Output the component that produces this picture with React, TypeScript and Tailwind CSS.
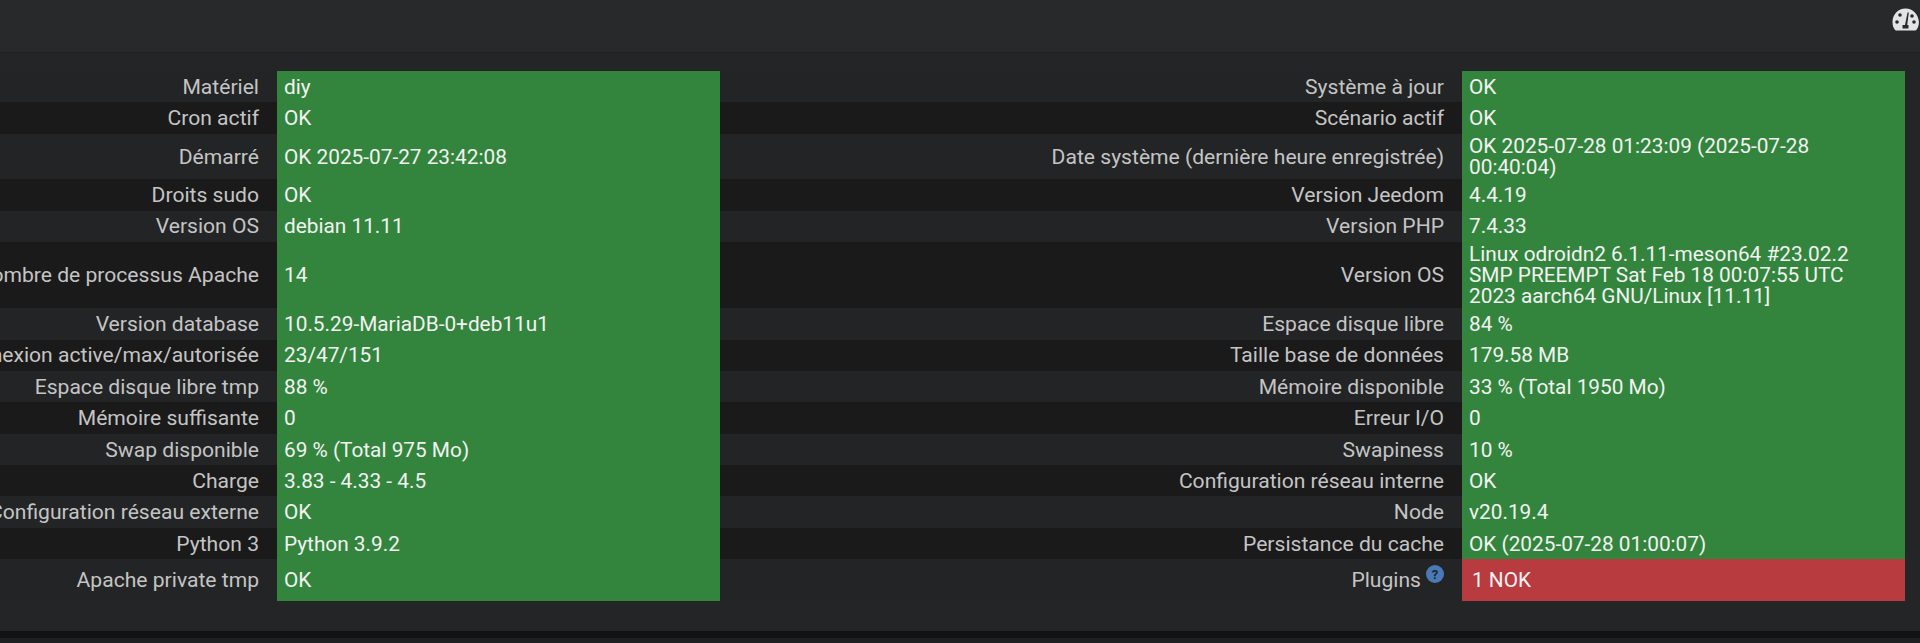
type Row = {
  label: string
  value: string
  label2: string
  value2: string
  help?: boolean
  bad?: boolean
  last?: boolean
}

const rows: Row[] = [
  { label: 'Matériel', value: 'diy', label2: 'Système à jour', value2: 'OK' },
  { label: 'Cron actif', value: 'OK', label2: 'Scénario actif', value2: 'OK' },
  { label: 'Démarré', value: 'OK 2025-07-27 23:42:08', label2: 'Date système (dernière heure enregistrée)', value2: 'OK 2025-07-28 01:23:09 (2025-07-28 00:40:04)' },
  { label: 'Droits sudo', value: 'OK', label2: 'Version Jeedom', value2: '4.4.19' },
  { label: 'Version OS', value: 'debian 11.11', label2: 'Version PHP', value2: '7.4.33' },
  { label: 'Nombre de processus Apache', value: '14', label2: 'Version OS', value2: 'Linux odroidn2 6.1.11-meson64 #23.02.2 SMP PREEMPT Sat Feb 18 00:07:55 UTC 2023 aarch64 GNU/Linux [11.11]' },
  { label: 'Version database', value: '10.5.29-MariaDB-0+deb11u1', label2: 'Espace disque libre', value2: '84 %' },
  { label: 'Nombre de connexion active/max/autorisée', value: '23/47/151', label2: 'Taille base de données', value2: '179.58 MB' },
  { label: 'Espace disque libre tmp', value: '88 %', label2: 'Mémoire disponible', value2: '33 % (Total 1950 Mo)' },
  { label: 'Mémoire suffisante', value: '0', label2: 'Erreur I/O', value2: '0' },
  { label: 'Swap disponible', value: '69 % (Total 975 Mo)', label2: 'Swapiness', value2: '10 %' },
  { label: 'Charge', value: '3.83 - 4.33 - 4.5', label2: 'Configuration réseau interne', value2: 'OK' },
  { label: 'Configuration réseau externe', value: 'OK', label2: 'Node', value2: 'v20.19.4' },
  { label: 'Python 3', value: 'Python 3.9.2', label2: 'Persistance du cache', value2: 'OK (2025-07-28 01:00:07)' },
  { label: 'Apache private tmp', value: 'OK', label2: 'Plugins', value2: '1 NOK', help: true, bad: true, last: true },
]

function Gauge() {
  return (
    <svg viewBox="0 0 27 23" className="h-[23px] w-[27px]">
      <path d="M13.5 0.5C6 0.5 0.5 6.5 0.5 14c0 3 .8 5.6 2 7.3.6.9 1.2 1.2 2.2 1.2h18c1 0 1.6-.3 2.2-1.2 1.2-1.7 2-4.300 2-7.300C26.500 6.500 21 .5 13.500 .5z" fill="#e4e4e4" />
      <circle cx="5" cy="14" r="1.800" fill="#27292a" />
      <circle cx="8" cy="7" r="1.800" fill="#27292a" />
      <circle cx="20" cy="8" r="1.800" fill="#27292a" />
      <circle cx="22" cy="14" r="1.800" fill="#27292a" />
      <path d="M15.500 4.500 13 17h-2.500v3.500h6V17h-1.300l1.600-12.500z" fill="#27292a" />
    </svg>
  )
}

export default function App() {
  return (
    <div className="flex h-[643px] w-[1920px] flex-col overflow-hidden bg-[#1e1f20] font-['Roboto',sans-serif] text-[20.8px] leading-[20.8px]">
      {/* Top bar */}
      <div className="flex h-[53px] shrink-0 items-start justify-end border-b border-[#1f2021] bg-[#27292a] pt-2 pr-px">
        <Gauge />
      </div>

      {/* Health panel */}
      <div className="h-[578px] shrink-0 overflow-hidden bg-[#242526] pt-[18px]">
        <table className="w-[1905px] table-fixed border-collapse">
          <colgroup>
            <col className="w-[277px]" />
            <col className="w-[443px]" />
            <col className="w-[742px]" />
            <col className="w-[443px]" />
          </colgroup>
          <tbody>
            {rows.map((r, i) => (
              <tr key={r.label} className={`${i % 2 ? 'bg-[#1a1a1b]' : 'bg-[#232425]'} ${r.last ? 'h-[41.5px]' : 'h-[31.35px]'}`}>
                <td className="pt-px pr-[18px] text-[21.1px] text-[#c4c4c4]">
                  <div className="flex justify-end">
                    <span className="shrink-0 whitespace-nowrap">{r.label}</span>
                  </div>
                </td>
                <td className="bg-[#33853d] px-[7px] pt-[2.5px] pb-[1.5px] text-[#f2f2f2]">{r.value}</td>
                <td className="pt-px pr-[18px] text-right text-[21.1px] text-[#c4c4c4]">
                  {r.label2}
                  {r.help && (
                    <span className="relative -top-[7px] ml-[5px] inline-flex h-[18px] w-[18px] items-center justify-center rounded-full bg-[#4a7ab5] align-middle text-[13px] font-bold leading-none text-[#1d2530]">
                      ?
                    </span>
                  )}
                </td>
                <td className={`${r.bad ? 'bg-[#b83b40] pl-[10px]' : 'bg-[#33853d] pl-[7px]'} pt-[2.5px] pb-[1.5px] pr-[40px] text-[#f2f2f2]`}>{r.value2}</td>
              </tr>
            ))}
          </tbody>
        </table>
      </div>

      {/* Bottom strip */}
      <div className="h-[7px] shrink-0 bg-[#111212]" />
    </div>
  )
}
